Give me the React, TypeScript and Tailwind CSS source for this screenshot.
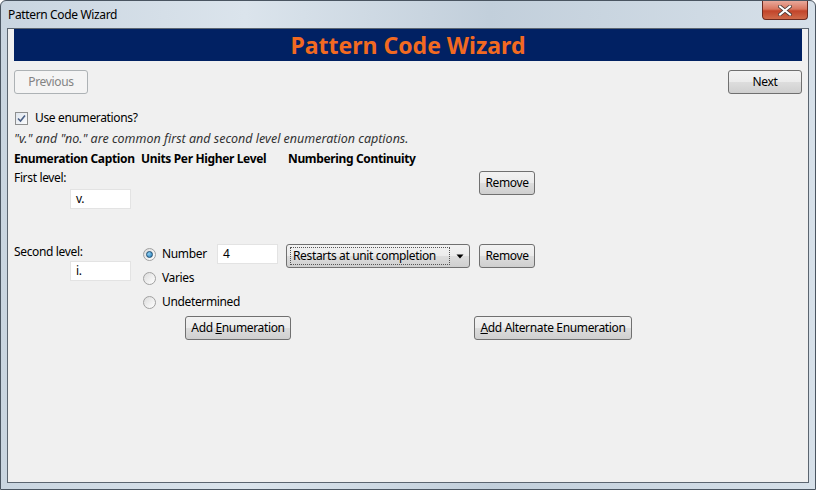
import React from 'react';

const font = "font-['Noto_Sans',sans-serif]";

function WinButton({
  children,
  disabled = false,
  className = '',
}: {
  children: React.ReactNode;
  disabled?: boolean;
  className?: string;
}) {
  return (
    <div
      className={
        'flex h-[24px] items-center justify-center rounded-[3px] border text-[12px] ' +
        (disabled
          ? 'border-[#adb2b5] bg-[#f4f4f4] text-[#838383] '
          : 'border-[#707070] bg-[linear-gradient(#f2f2f2_0%,#ebebeb_50%,#dddddd_51%,#cfcfcf_100%)] text-black ') +
        className
      }
    >
      {children}
    </div>
  );
}

function TextBox({ value, className = '' }: { value: string; className?: string }) {
  return (
    <div
      className={
        'flex h-[20px] w-[61px] items-center border border-[#e3e3e3] bg-white pl-[5px] text-[12px] text-black ' +
        className
      }
    >
      {value}
    </div>
  );
}

function Radio({ checked = false, label }: { checked?: boolean; label: string }) {
  return (
    <div className="flex h-[20px] items-center">
      <div className="ml-[2px] flex h-[13px] w-[13px] items-center justify-center rounded-full border border-[#a0a0a0] bg-[linear-gradient(135deg,#dcdcdc,#ffffff)]">
        {checked && (
          <div className="h-[7px] w-[7px] rounded-full border border-[#1f4f73] bg-[radial-gradient(circle_at_35%_35%,#8fd0f5,#1f78b4)]" />
        )}
      </div>
      <span className="ml-[6px] text-[12px]">{label}</span>
    </div>
  );
}

export default function App() {
  return (
    <div className={`${font} h-[490px] w-[816px] overflow-hidden bg-white text-black tracking-[-0.35px]`}>
      <div className="flex h-[490px] w-[816px] flex-col rounded-t-[6px] border border-[#4a5561] bg-[linear-gradient(90deg,#c9d5e0_0%,#dbe4ec_30%,#c2cfdb_60%,#d6e0e9_100%)] px-[6px] pb-[6px]">
        {/* title bar */}
        <div className="flex h-[27px] shrink-0 items-start justify-between">
          <span className="pl-[1px] pt-[6px] text-[12px] leading-[16px] text-black">Pattern Code Wizard</span>
          <div className="mr-[1px] flex h-[19px] w-[46px] items-center justify-center rounded-b-[4px] border border-t-0 border-[#6b2a20] bg-[linear-gradient(#e9a99b_0%,#d9765f_45%,#c2442a_55%,#cf6a4a_100%)]">
            <svg width="14" height="11" viewBox="0 0 14 11">
              <path d="M2 1.5 L12 9.5 M12 1.5 L2 9.5" stroke="#4a3a36" strokeWidth="3.6" strokeLinecap="square" />
              <path d="M2 1.5 L12 9.5 M12 1.5 L2 9.5" stroke="#ffffff" strokeWidth="2" strokeLinecap="square" />
            </svg>
          </div>
        </div>

        {/* client area */}
        <div className="flex flex-1 flex-col border border-[#5b6570] bg-[#f0f0f0] px-[6px]">
          <div className="flex h-[32px] shrink-0 items-center justify-center bg-[#012163]">
            <span className="text-[23px] font-bold tracking-normal text-[#f26a21]">Pattern Code Wizard</span>
          </div>

          <div className="mt-[9px] flex justify-between">
            <WinButton disabled className="w-[74px]">Previous</WinButton>
            <WinButton className="w-[74px]">Next</WinButton>
          </div>

          <div className="mt-[16px] flex h-[16px] items-center pl-[1px]">
            <div className="flex h-[13px] w-[13px] items-center justify-center border border-[#8e8f8f] bg-[linear-gradient(135deg,#e0e6ee,#fafbfc)]">
              <svg width="9" height="9" viewBox="0 0 9 9">
                <path d="M1 4.5 L3.5 7 L8 1.5" fill="none" stroke="#4a5f85" strokeWidth="1.6" />
              </svg>
            </div>
            <span className="ml-[7px] text-[12px]">Use enumerations?</span>
          </div>

          <div className="mt-[5px] whitespace-nowrap text-[12.5px] italic leading-[16px] tracking-normal text-[#333]">
            "v." and "no." are common first and second level enumeration captions.
          </div>

          <div className="mt-[4px] flex whitespace-nowrap text-[12px] font-bold leading-[16px]">
            <span className="w-[127px]">Enumeration Caption</span>
            <span className="w-[147px]">Units Per Higher Level</span>
            <span>Numbering Continuity</span>
          </div>

          {/* first level */}
          <div className="mt-[3px] flex">
            <div className="flex w-[465px] flex-col">
              <span className="text-[12px] leading-[16px]">First level:</span>
              <TextBox value="v." className="ml-[56px] mt-[3px]" />
            </div>
            <WinButton className="mt-[1px] w-[56px]">Remove</WinButton>
          </div>

          {/* second level */}
          <div className="mt-[35px] flex">
            <div className="flex w-[127px] flex-col">
              <span className="text-[12px] leading-[16px]">Second level:</span>
              <TextBox value="i." className="ml-[56px] mt-[1px]" />
            </div>
            <div className="flex w-[145px] flex-col">
              <div className="flex items-center">
                <div className="w-[76px]">
                  <Radio checked label="Number" />
                </div>
                <TextBox value="4" />
              </div>
              <div className="mt-[4px]">
                <Radio label="Varies" />
              </div>
              <div className="mt-[4px]">
                <Radio label="Undetermined" />
              </div>
            </div>
            <div className="w-[193px]">
              <div className="flex h-[24px] w-[184px] items-center rounded-[3px] border border-[#707070] bg-[linear-gradient(#f2f2f2_0%,#ebebeb_50%,#dddddd_51%,#cfcfcf_100%)] pl-[3px] text-[12px]">
                <div className="flex h-[18px] w-[160px] items-center whitespace-nowrap border border-dotted border-[#555] pl-[2px]">
                  Restarts at unit completion
                </div>
                <svg className="ml-[6px]" width="8" height="5" viewBox="0 0 8 5">
                  <path d="M0.5 0.5 L7.5 0.5 L4 4.5 Z" fill="#000" />
                </svg>
              </div>
            </div>
            <WinButton className="w-[56px]">Remove</WinButton>
          </div>

          <div className="mt-[4px] flex">
            <div className="w-[171px]" />
            <WinButton className="w-[106px]">
              <span>
                Add <span className="underline">E</span>numeration
              </span>
            </WinButton>
            <div className="w-[183px]" />
            <WinButton className="w-[158px]">
              <span>
                <span className="underline">A</span>dd Alternate Enumeration
              </span>
            </WinButton>
          </div>
        </div>
      </div>
    </div>
  );
}
